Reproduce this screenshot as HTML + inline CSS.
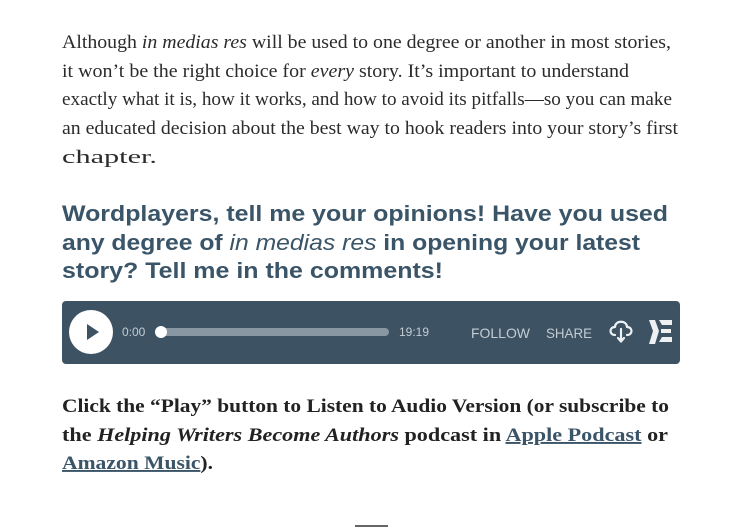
<!DOCTYPE html>
<html><head><meta charset="utf-8"><style>
html,body{margin:0;padding:0;background:#fff;width:751px;height:528px;overflow:hidden}
svg{display:block}
.p{font-family:"Liberation Serif",serif;font-size:19px;fill:#2b2b2b}
.h{font-family:"Liberation Sans",sans-serif;font-size:22px;font-weight:bold;fill:#3a5468}
.b{font-family:"Liberation Serif",serif;font-size:19px;font-weight:bold;fill:#222}
.l{fill:#3a5468}
.pl{font-family:"Liberation Sans",sans-serif;fill:#c3ccd3}
</style></head><body>
<svg width="751" height="528" viewBox="0 0 751 528">
<text class="p" x="62" y="48" textLength="609" lengthAdjust="spacingAndGlyphs">Although <tspan font-style="italic">in medias res</tspan> will be used to one degree or another in most stories,</text>
<text class="p" x="62" y="77" textLength="567" lengthAdjust="spacingAndGlyphs">it won’t be the right choice for <tspan font-style="italic">every</tspan> story. It’s important to understand</text>
<text class="p" x="62" y="105" textLength="610" lengthAdjust="spacingAndGlyphs">exactly what it is, how it works, and how to avoid its pitfalls—so you can make</text>
<text class="p" x="62" y="134" textLength="616" lengthAdjust="spacingAndGlyphs">an educated decision about the best way to hook readers into your story’s first</text>
<text class="p" x="62" y="163" textLength="95" lengthAdjust="spacingAndGlyphs">chapter.</text>

<text class="h" x="62" y="221" textLength="606" lengthAdjust="spacingAndGlyphs">Wordplayers, tell me your opinions! Have you used</text>
<text class="h" x="62" y="250" textLength="578" lengthAdjust="spacingAndGlyphs">any degree of <tspan font-style="italic" font-weight="normal">in medias res</tspan> in opening your latest</text>
<text class="h" x="62" y="278" textLength="381" lengthAdjust="spacingAndGlyphs">story? Tell me in the comments!</text>

<rect x="62" y="301" width="618" height="63" rx="4" fill="#3d5262"/>
<circle cx="91" cy="332" r="22" fill="#fff"/>
<path d="M87 324 L99 332 L87 340 Z" fill="#3d5262"/>
<text class="pl" x="122" y="336" font-size="12">0:00</text>
<rect x="160" y="328" width="229" height="8" rx="4" fill="#8997a3"/>
<circle cx="161" cy="332" r="6" fill="#fff"/>
<text class="pl" x="399" y="336" font-size="12">19:19</text>
<text class="pl" x="471" y="338" font-size="14" textLength="59" lengthAdjust="spacingAndGlyphs">FOLLOW</text>
<text class="pl" x="546" y="338" font-size="14" textLength="46" lengthAdjust="spacingAndGlyphs">SHARE</text>
<g fill="none" stroke="#eef1f3" stroke-width="2.2" stroke-linecap="round" stroke-linejoin="round">
<path d="M615 335 C609 335 609 327 615 327 C615 320 627 320 627 327 C633 327 633 335 627 335"/>
<path d="M621 329 V341 M618 338 L621 341.5 L624 338"/>
</g>
<g fill="#eef1f3">
<path d="M649 320 L655 320 L659 331 L655 344 L649 344 L653 331 Z"/>
<path d="M659 320 L672 320 L672 325 L662 325 Z"/>
<rect x="661" y="329" width="10" height="4"/>
<path d="M662 337 L672 337 L672 342 L659 342 Z"/>
</g>

<text class="b" x="62" y="412" textLength="607" lengthAdjust="spacingAndGlyphs">Click the “Play” button to Listen to Audio Version (or subscribe to</text>
<text class="b" x="62" y="441" textLength="606" lengthAdjust="spacingAndGlyphs">the <tspan font-style="italic">Helping Writers Become Authors</tspan> podcast in <tspan class="l" text-decoration="underline">Apple Podcast</tspan> or</text>
<text class="b" x="62" y="469" textLength="151" lengthAdjust="spacingAndGlyphs"><tspan class="l" text-decoration="underline">Amazon Music</tspan>).</text>
<rect x="355" y="525" width="33" height="2" fill="#666"/>
</svg>
</body></html>
